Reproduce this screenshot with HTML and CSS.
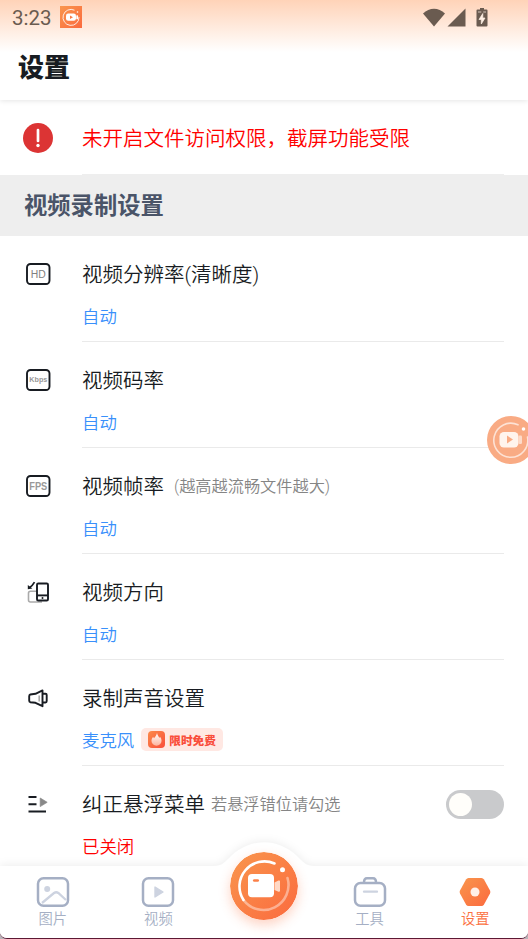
FILE: index.html
```html
<!DOCTYPE html>
<html lang="zh-CN">
<head>
<meta charset="utf-8">
<title>设置</title>
<link rel="stylesheet" href="styles.css">
</head>
<body>
<div class="screen">
  <header class="header">
    <div class="status">
      <span class="clock">3:23</span>
      <svg class="app-icon" width="22" height="22" viewBox="0 0 22 22">
        <defs><linearGradient id="orange" x1="0" y1="0" x2="1" y2="1"><stop offset="0" stop-color="#f9964d"/><stop offset="1" stop-color="#fb6a3e"/></linearGradient></defs>
        <rect width="22" height="22" fill="url(#orange)"/>
        <path d="M14.5 4.2A8 8 0 1 0 19 11" fill="none" stroke="#fff" stroke-width="1" opacity=".85"/>
        <circle cx="17.5" cy="6" r=".8" fill="#fff"/>
        <rect x="6" y="7.5" width="10" height="7.3" rx="2.2" fill="#fff"/>
        <rect x="16.3" y="9.3" width="1.8" height="4" rx=".6" fill="#fff"/>
        <path d="M10 9.5v3.4l3-1.7z" fill="#fb7a45"/>
      </svg>
      <svg class="signals" width="68" height="22" viewBox="0 0 68 22" fill="#6a5b50">
        <path d="M0 5.6C6.500-.8 15.500-.8 22 5.600L11 18.500z"/>
        <path d="M42.500 .5v18H24.500z"/>
        <path d="M57 0h4v1.500h2.500a1 1 0 0 1 1 1V17.500a1 1 0 0 1-1 1H54.500a1 1 0 0 1-1-1V2.500a1 1 0 0 1 1-1H57z"/>
        <path d="M59.800 5.500L56 11.500h2.300v4.500L62 10h-2.200zM55 4h3.300M60.200 4h2.800" fill="#fff0e5" stroke="#fff0e5" stroke-width=".7"/>
      </svg>
    </div>
    <h1 class="title">设置</h1>
  </header>

  <main class="content">
    <section class="alert">
      <svg class="alert-icon" width="30" height="30" viewBox="0 0 30 30"><circle cx="15" cy="15" r="15" fill="#dc3434"/><path d="M15 7v11" stroke="#fff" stroke-width="2.700" stroke-linecap="round"/><circle cx="15" cy="22.500" r="1.700" fill="#fff"/></svg>
      <p class="alert-text">未开启文件访问权限，截屏功能受限</p>
    </section>
    <h2 class="section-title">视频录制设置</h2>

    <div class="row">
      <svg class="row-icon" viewBox="0 0 28 28"><rect class="ink" x="3" y="4" width="22.500" height="20" rx="3.500"/><text class="tag tag-light" x="14.300" y="17.600" textLength="15" lengthAdjust="spacingAndGlyphs">HD</text></svg>
      <div class="row-body"><div class="row-name">视频分辨率(清晰度)</div><div class="row-value">自动</div></div>
    </div>
    <div class="row">
      <svg class="row-icon" viewBox="0 0 28 28"><rect class="ink" x="3" y="4" width="22.500" height="20" rx="3.500"/><text class="tag tag-small" x="14.300" y="16" textLength="18" lengthAdjust="spacingAndGlyphs">Kbps</text></svg>
      <div class="row-body"><div class="row-name">视频码率</div><div class="row-value">自动</div></div>
    </div>
    <div class="row">
      <svg class="row-icon" viewBox="0 0 28 28"><rect class="ink" x="3" y="4" width="22.500" height="20" rx="3.500"/><text class="tag" x="14.300" y="17.600" textLength="18" lengthAdjust="spacingAndGlyphs">FPS</text></svg>
      <div class="row-body"><div class="row-name">视频帧率<span class="hint hint-wide">(越高越流畅文件越大)</span></div><div class="row-value">自动</div></div>
    </div>
    <div class="row">
      <svg class="row-icon" viewBox="0 0 28 28"><path class="soft" d="M12.500 13.300H6.500a2 2 0 0 0-2 2v6.700a2 2 0 0 0 2 2H18"/><rect class="ink" x="13" y="5.500" width="11" height="17" rx="1.300"/><path class="ink" d="M13 17.400h11"/><circle cx="18.500" cy="20" r="1" fill="#181c22"/><path d="M10.500 4.200C9.500 6 8 8 5.500 9.700" fill="none" stroke="#181c22" stroke-width="1.700"/><path d="M3.800 7v4.200l4.600-.6z" fill="#181c22"/></svg>
      <div class="row-body"><div class="row-name">视频方向</div><div class="row-value">自动</div></div>
    </div>
    <div class="row">
      <svg class="row-icon" viewBox="0 0 28 28"><path class="ink" d="M6.300 10.500L11.500 9.800 18.500 6.400V22.200L11.500 18.800 6.300 18.200Q5.200 17.800 5.200 16.500V12.200Q5.200 10.800 6.300 10.500z"/><path class="ink" d="M19 9.800h2.500q1.200 0 1.200 1.200v6q0 1.500-1.200 1.500H19"/><path class="soft" d="M15.200 11.500v6" stroke-width="1"/></svg>
      <div class="row-body"><div class="row-name">录制声音设置</div>
        <div class="row-value">麦克风
          <span class="badge"><svg width="17" height="17" viewBox="0 0 17 17"><rect width="17" height="17" rx="4" fill="url(#flame)"/><defs><linearGradient id="flame" x1="0" y1="0" x2="1" y2="1"><stop offset="0" stop-color="#fb8b4a"/><stop offset="1" stop-color="#f94e3c"/></linearGradient><linearGradient id="glow" x1="0" y1="0" x2="0" y2="1"><stop offset="0" stop-color="#fff"/><stop offset="1" stop-color="#fdb49e"/></linearGradient></defs><path d="M9 2C9.500 4.500 11 5.500 11.300 7L12 5.700C13 7 13.700 8.400 13.500 10A5 4.700 0 0 1 3.500 10C3.400 8 4.500 6.900 5 5.700L6 7.300C7.500 5.500 8.500 4 9 2z" fill="url(#glow)"/></svg>限时免费</span>
        </div>
      </div>
    </div>
    <div class="row">
      <svg class="row-icon" viewBox="0 0 28 28"><path class="ink" d="M4.500 7h8M4.500 14.300h8M4.500 21.500h17.500"/><path d="M16.200 8l7 4.300-7 4.300z" fill="#888" stroke="#888" stroke-width=".7" stroke-linejoin="round"/></svg>
      <div class="row-body"><div class="row-name">纠正悬浮菜单<span class="hint">若悬浮错位请勾选</span></div><div class="row-value off">已关闭</div></div>
      <span class="switch"><span class="knob"></span></span>
    </div>
  </main>

  <svg class="floating" width="48" height="48" viewBox="0 0 48 48">
    <circle cx="24" cy="24" r="24" fill="#f9ab84"/>
    <path d="M31 8.800A17 17 0 1 0 40.500 21" fill="none" stroke="#fff" stroke-width="1.600" stroke-linecap="round" opacity=".65"/>
    <circle cx="36.500" cy="13" r="1.800" fill="#fff"/>
    <rect x="12.500" y="16" width="19" height="15.500" rx="4.500" fill="#fff4ed"/>
    <rect x="31.500" y="19.500" width="3.500" height="8.500" rx="1.200" fill="#fddbc9"/>
    <path d="M20 19.500v8l6-4z" fill="#f9ab84"/>
  </svg>

  <nav class="nav">
    <svg class="nav-bg" width="528" height="97" viewBox="0 0 528 97"><path d="M0 25H214C222 25 225 21 231 15C250-3.500 278-3.500 297 15C303 21 306 25 314 25H528V97H0z" fill="#fff"/></svg>
    <a class="tab"><svg width="34" height="32" viewBox="0 0 34 32"><path d="M6 27l12-10c1.500-1 3-1 4.300 0L30 24" fill="none" stroke="#cdd3e0" stroke-width="2.300"/><circle cx="11.200" cy="13" r="3" fill="#cdd3e0"/><rect class="frame" x="2" y="2.200" width="30" height="27.600" rx="5.500"/></svg>图片</a>
    <a class="tab"><svg width="34" height="32" viewBox="0 0 34 32"><path d="M14 11v10l8-5z" fill="#cdd3e0" stroke="#cdd3e0" stroke-linejoin="round" stroke-width="1.400"/><rect class="frame" x="2" y="2.200" width="30" height="27.600" rx="5.500"/></svg>视频</a>
    <a class="tab"><svg class="record" width="68" height="68" viewBox="0 0 68 68">
      <circle cx="34" cy="34" r="34" fill="url(#orange)"/>
      <path d="M44.500 11.500A25 25 0 0 0 13.500 48" fill="none" stroke="#fff" stroke-width="2.600" stroke-linecap="round"/>
      <path d="M13.500 48A25 25 0 0 0 57.500 26" fill="none" stroke="#fff" stroke-width="2.600" stroke-linecap="round" opacity=".42"/>
      <circle cx="52.500" cy="17.800" r="2.500" fill="#fff"/>
      <rect x="18" y="22" width="26" height="23.300" rx="4" fill="#fff"/>
      <path d="M24.300 28.500h3.400" stroke="#fb8048" stroke-width="2.700" stroke-linecap="round"/>
      <path d="M44.500 30.500l4-2q1.500-.5 1.500 1v9q0 1.500-1.500 1.200l-4-1.700z" fill="#ffd9c6"/></svg></a>
    <a class="tab"><svg width="34" height="32" viewBox="0 0 34 32"><path class="frame" d="M11 6.500c0-3 1-4.300 3-4.300h6c2 0 3 1.300 3 4.300"/><rect class="frame" x="2" y="7" width="30" height="22.800" rx="5.500"/><path d="M11 15.700h13" stroke="#cdd3e0" stroke-width="2.300" stroke-linecap="round"/></svg>工具</a>
    <a class="tab active"><svg width="34" height="32" viewBox="0 0 34 32"><path d="M10.500 2h13q1.500 0 2.500 1.500L32 14.500q.8 1.500 0 3L26 28.500q-1 1.500-2.500 1.500h-13q-1.500 0-2.500-1.500L2 17.500q-.8-1.500 0-3L8 3.500Q9 2 10.500 2z" fill="url(#orange)"/><circle cx="17" cy="16" r="4.500" fill="#fff0e8"/></svg>设置</a>
  </nav>
</div>
</body>
</html>
```

FILE: styles.css
```css
* { box-sizing: border-box; }

body {
  margin: 0;
  background: #b9b4b8;
  font-family: Roboto, "Noto Sans CJK SC", sans-serif;
}

.screen {
  position: relative;
  width: 528px;
  height: 939px;
  overflow: hidden;
  background: #fff;
  border-bottom: 1px solid #5c1834;
  border-radius: 0 0 7px 7px;
}

.header {
  height: 100px;
  background: linear-gradient(#ffd3b8 0, #fff 52px);
  box-shadow: 0 1px 5px rgba(0, 0, 0, .1);
}

.status {
  display: flex;
  align-items: center;
  height: 35px;
  padding: 0 37px 0 12px;
}

.clock {
  width: 48px;
  color: #6a5b50;
  font-size: 20.5px;
  line-height: 24px;
  padding-top: 1px;
}

.app-icon { margin-top: -1px; }

.signals { margin: 2px 0 0 auto; }

.title {
  margin: 14px 0 0 18px;
  font-family: "Noto Sans CJK SC", sans-serif;
  font-size: 26px;
  font-weight: 900;
  line-height: 34px;
  color: #181c22;
}

.alert {
  display: flex;
  align-items: center;
  height: 75px;
  padding-left: 23px;
}

.alert-icon { flex: none; margin-right: 29px; }

.alert-text {
  display: flex;
  align-items: center;
  width: 422px;
  height: 75px;
  margin: 0;
  border-bottom: 1px solid #eee;
  color: #f00;
  font-size: 20.5px;
  font-weight: 350;
}

.section-title {
  height: 61px;
  margin: 0;
  padding-left: 24px;
  background: #eee;
  color: #4a5468;
  font-size: 23.3px;
  font-weight: 700;
  line-height: 63px;
}

.row {
  position: relative;
  display: flex;
  height: 106px;
  padding: 0 24px;
}

.row-icon {
  flex: none;
  width: 28px;
  height: 28px;
  margin: 24px 30px 0 0;
}

.row-body {
  flex: 1;
  border-bottom: 1px solid #eaeaea;
}

.row-name {
  display: flex;
  align-items: center;
  height: 36px;
  margin-top: 19px;
  color: #181c22;
  font-size: 20.5px;
  font-weight: 350;
}

.hint { margin-left: 6px; color: #858585; font-size: 16.2px; }
.hint-wide { margin-left: 10px; }

.row-value {
  display: flex;
  align-items: center;
  gap: 7px;
  height: 30px;
  margin-top: 9px;
  color: #3990fb;
  font-size: 17.4px;
  font-weight: 350;
}

.off { color: #f00; }

.badge {
  display: flex;
  align-items: center;
  gap: 4px;
  width: 82px;
  height: 23px;
  padding-left: 7px;
  border-radius: 5px;
  background: #ffe8e3;
  color: #f94e3c;
  font-size: 11.7px;
  font-weight: 900;
}

.switch {
  position: absolute;
  top: 24px;
  right: 24px;
  width: 58px;
  height: 29px;
  padding: 3px;
  border-radius: 15px;
  background: #c9cacc;
}

.knob {
  display: block;
  width: 23px;
  height: 23px;
  border-radius: 50%;
  background: #fffefa;
}

.ink { fill: none; stroke: #181c22; stroke-width: 1.9; stroke-linejoin: round; }
.soft { fill: none; stroke: #aaa; stroke-width: 1.6; }

.tag {
  fill: #999;
  font: 700 10px "Liberation Sans", sans-serif;
  text-anchor: middle;
}

.tag-light { font-weight: 400; fill: #808080; }
.tag-small { font-size: 7.5px; }

.floating { position: absolute; top: 416px; left: 487px; }

.nav {
  position: absolute;
  left: 0;
  bottom: 0;
  display: grid;
  grid-template-columns: repeat(5, 1fr);
  width: 528px;
  height: 72px;
}

.nav-bg {
  position: absolute;
  left: 0;
  bottom: 0;
  overflow: visible;
  filter: drop-shadow(0 -1px 4px rgba(0, 0, 0, .07));
}

.tab {
  position: relative;
  display: flex;
  flex-direction: column;
  align-items: center;
  padding-top: 10px;
  color: #a5afc4;
  font-size: 14.3px;
  font-weight: 350;
  line-height: 22px;
}

.active { color: #fb7040; }
.frame { fill: none; stroke: #a5afc4; stroke-width: 2.5; }

.record {
  flex: none;
  margin-top: -24px;
  border-radius: 50%;
  box-shadow: 0 5px 12px rgba(251, 112, 64, .3);
}
```
